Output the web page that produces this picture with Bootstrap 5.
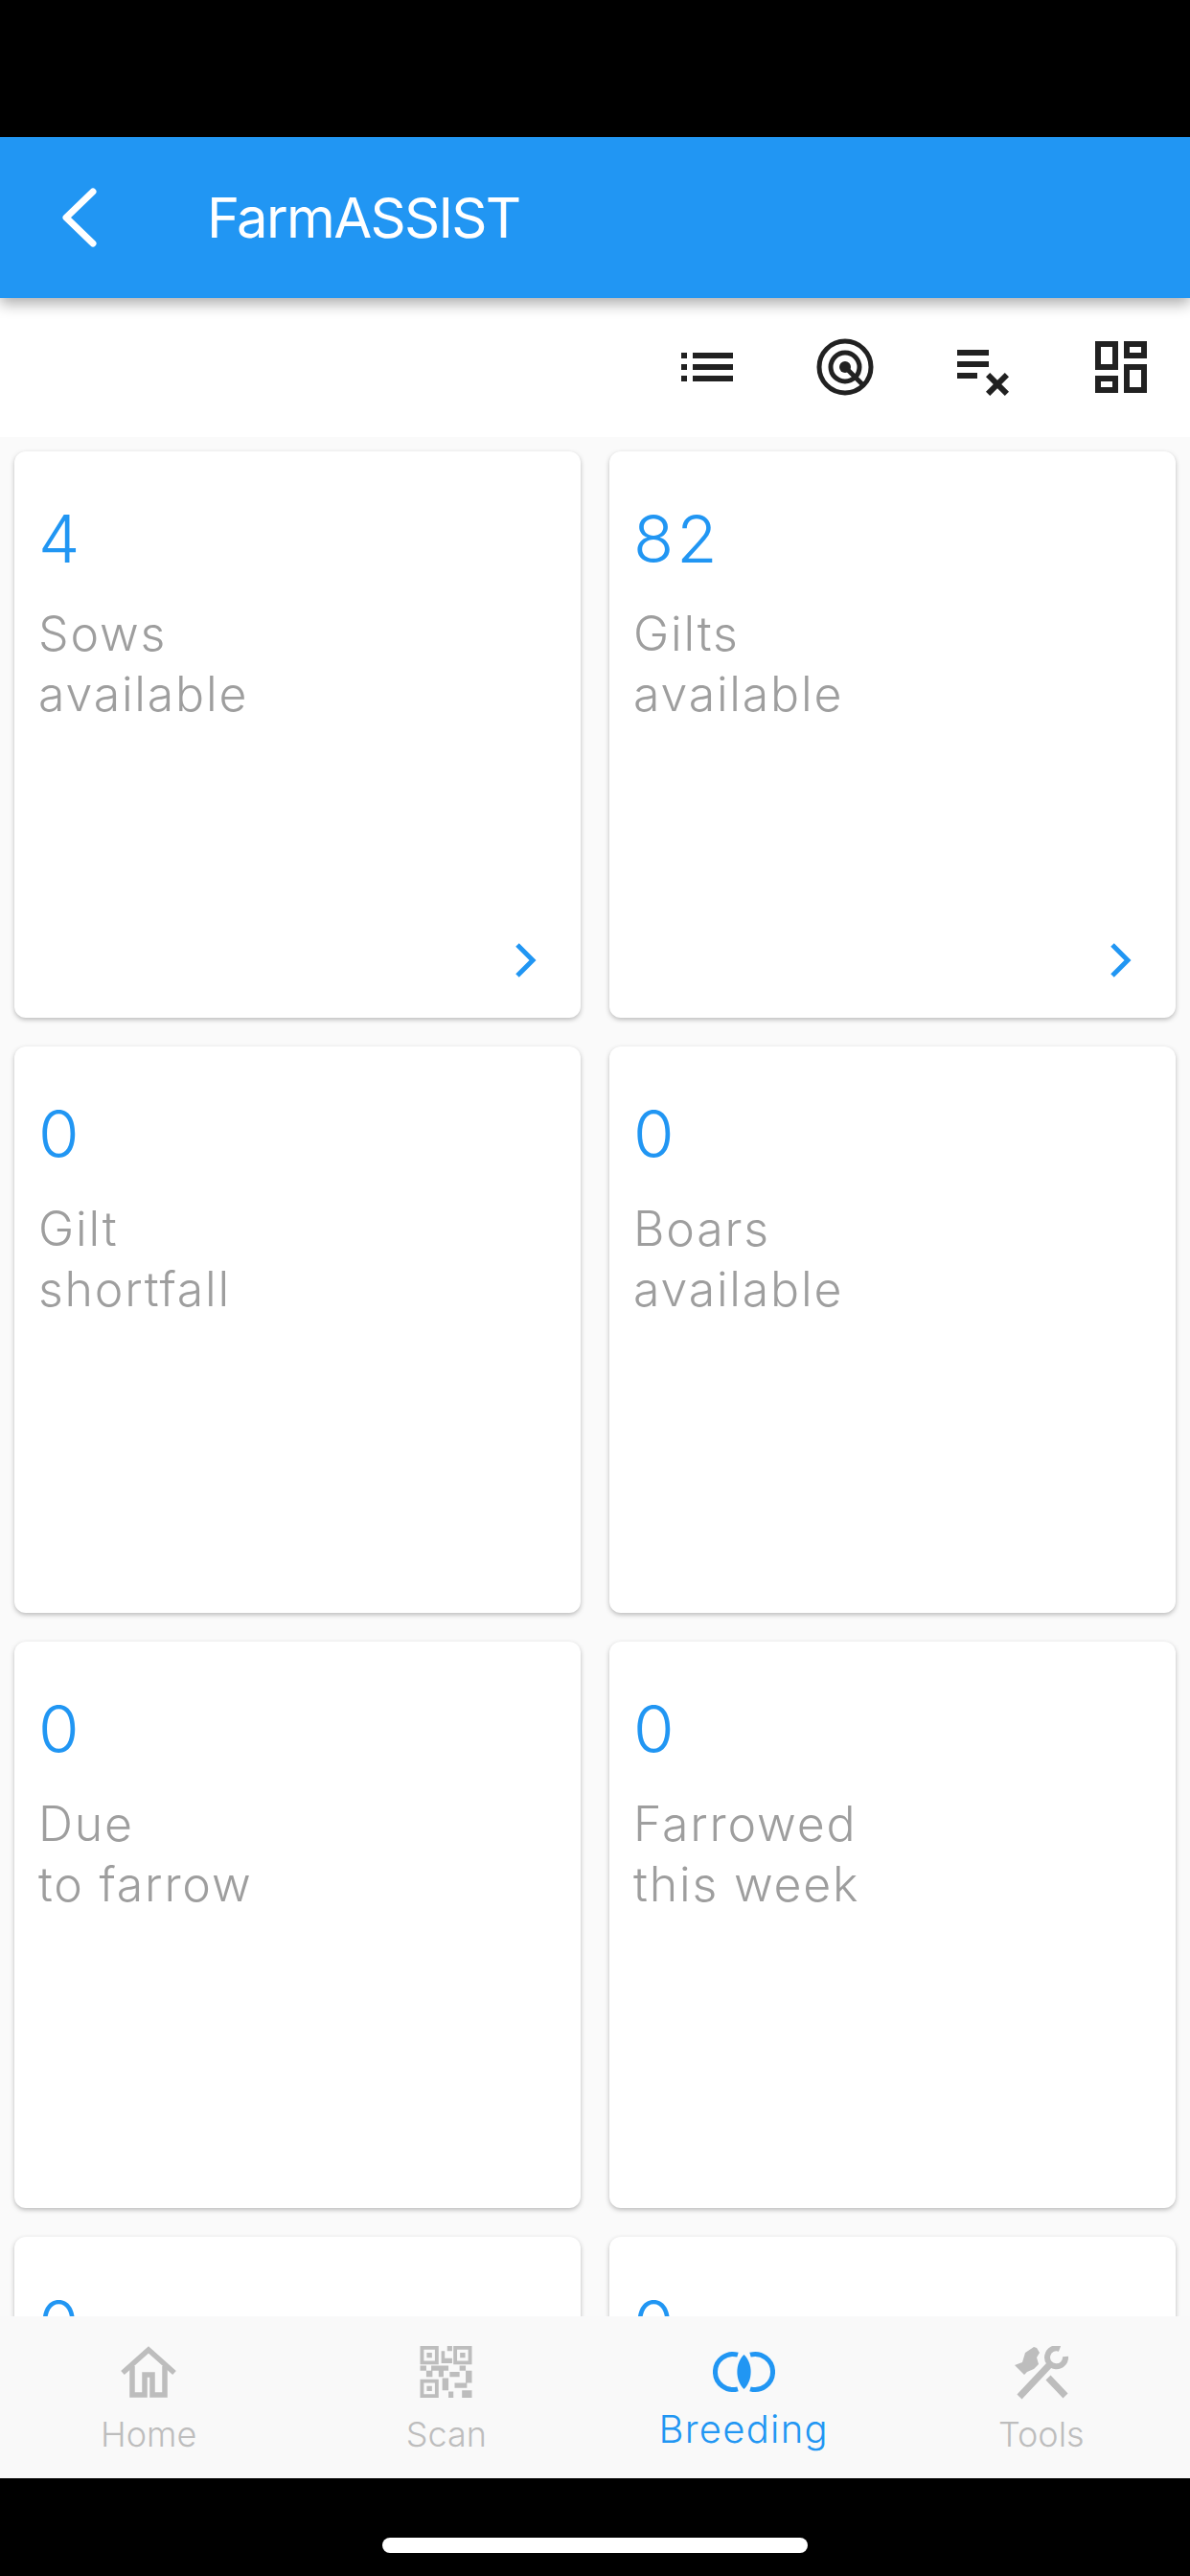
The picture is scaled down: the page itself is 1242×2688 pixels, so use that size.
<!DOCTYPE html>
<html lang="en">
<head>
<meta charset="utf-8">
<title>FarmASSIST</title>
<link href="https://cdn.jsdelivr.net/npm/bootstrap@5.3.0/dist/css/bootstrap.min.css" rel="stylesheet">
<style>
html,body{margin:0;background:#000;}
.phone{width:1242px;height:2688px;background:#000;font-family:Inter,"Liberation Sans",sans-serif;}
.top-inset{height:143px;flex:none;}
.app-bar{height:168px;flex:none;background:#2196f3;color:#fff;box-shadow:0 6px 14px rgba(0,0,0,.32);z-index:2;padding-left:60px;}
.app-bar svg{width:48px;height:64px;flex:none;}
.app-title{font-size:58px;font-weight:400;margin-left:108px;letter-spacing:-1.7px;line-height:1;}
.tool-row{height:145px;flex:none;background:#fff;}
.tool-btn{width:144px;height:144px;background:none;border:0;padding:36px;}
.tool-btn svg{width:72px;height:72px;display:block;fill:#212121;}
.tile-area{flex:1 1 0;min-height:0;background:#fafafa;overflow:hidden;}
.tiles{grid-template-columns:591px 591px;gap:30px;padding:15px;}
.tile{height:591px;background:#fff;border-radius:12px;box-shadow:0 2px 5px rgba(0,0,0,.26);padding:56px 26px 41px 25px;}
.tile-num{font-size:69px;line-height:70px;color:#2196f3;font-weight:300;letter-spacing:3px;}
.tile-label{font-size:50px;line-height:63px;color:#9e9e9e;font-weight:300;letter-spacing:1.8px;margin-top:33px;}
.tile-go{width:24px;height:38px;margin-right:20px;}
.tab-bar{height:169px;flex:none;background:#f9f9f9;}
.tab-item{flex:1 1 0;height:169px;padding-top:31px;color:#bdbdbd;}
.tab-icon{height:56px;}
.tab-label{font-size:36px;line-height:44px;font-weight:300;margin-top:14px;}
.tab-item.on{color:#2196f3;}
.tab-item.on .tab-label{font-size:40px;line-height:50px;letter-spacing:1.3px;margin-top:6px;}
.bottom-inset{height:102px;flex:none;background:#000;}
.home-pill{width:444px;height:16px;border-radius:8px;background:#fff;margin-top:62px;}
</style>
</head>
<body>
<div class="phone d-flex flex-column">
  <div class="top-inset"></div>
  <header class="app-bar d-flex align-items-center">
    <svg viewBox="0 0 48 64" fill="none" stroke="#fff" stroke-width="7" stroke-linecap="round" stroke-linejoin="round"><path d="M37 5 9 32l28 27"/></svg>
    <div class="app-title">FarmASSIST</div>
  </header>
  <div class="tool-row d-flex justify-content-end">
    <button class="tool-btn" type="button" aria-label="List"><svg viewBox="0 0 24 24"><path d="M3 13h2v-2H3v2zm0 4h2v-2H3v2zm0-8h2V7H3v2zm4 4h14v-2H7v2zm0 4h14v-2H7v2zM7 7v2h14V7H7z"/></svg></button>
    <button class="tool-btn" type="button" aria-label="Target"><svg viewBox="0 0 72 72"><g fill="none" stroke="#212121" stroke-width="5"><circle cx="36" cy="36" r="27"/><circle cx="36" cy="36" r="15"/><path d="M36 36 55 55"/></g><circle cx="36" cy="36" r="6"/></svg></button>
    <button class="tool-btn" type="button" aria-label="Clear"><svg viewBox="0 0 24 24"><path d="M14 10H3v2h11v-2zm0-4H3v2h11V6zM3 16h7v-2H3v2zm11.41 6L17 19.41 19.59 22 21 20.59 18.41 18 21 15.41 19.59 14 17 16.59 14.41 14 13 15.41 15.59 18 13 20.59z"/></svg></button>
    <button class="tool-btn" type="button" aria-label="Dashboard"><svg viewBox="0 0 24 24"><path d="M19 5v2h-4V5h4M9 5v6H5V5h4m10 8v6h-4v-6h4M9 17v2H5v-2h4M21 3h-8v6h8V3zM11 3H3v10h8V3zm10 8h-8v10h8V11zm-10 4H3v6h8v-6z"/></svg></button>
  </div>
  <main class="tile-area">
    <div class="tiles d-grid">
      <div class="tile d-flex flex-column"><div class="tile-num">4</div><div class="tile-label">Sows<br>available</div><svg class="tile-go mt-auto align-self-end" viewBox="0 0 24 38" fill="none" stroke="#2196f3" stroke-width="5"><path d="M4 3l16 16L4 35"/></svg></div>
      <div class="tile d-flex flex-column"><div class="tile-num">82</div><div class="tile-label">Gilts<br>available</div><svg class="tile-go mt-auto align-self-end" viewBox="0 0 24 38" fill="none" stroke="#2196f3" stroke-width="5"><path d="M4 3l16 16L4 35"/></svg></div>
      <div class="tile d-flex flex-column"><div class="tile-num">0</div><div class="tile-label">Gilt<br>shortfall</div></div>
      <div class="tile d-flex flex-column"><div class="tile-num">0</div><div class="tile-label">Boars<br>available</div></div>
      <div class="tile d-flex flex-column"><div class="tile-num">0</div><div class="tile-label">Due<br>to farrow</div></div>
      <div class="tile d-flex flex-column"><div class="tile-num">0</div><div class="tile-label">Farrowed<br>this week</div></div>
      <div class="tile d-flex flex-column"><div class="tile-num">0</div></div>
      <div class="tile d-flex flex-column"><div class="tile-num">0</div></div>
    </div>
  </main>
  <nav class="tab-bar d-flex">
    <div class="tab-item d-flex flex-column align-items-center">
      <div class="tab-icon"><svg width="58" height="54" viewBox="0 0 58 54" fill="none" stroke="#bdbdbd" stroke-width="5.5"><path d="M2 28 29 4l27 24"/><path d="M12 21v30h13V30h8v21h13V21"/></svg></div>
      <div class="tab-label">Home</div>
    </div>
    <div class="tab-item d-flex flex-column align-items-center">
      <div class="tab-icon"><svg width="55" height="54" viewBox="0 0 21 21" fill="#bdbdbd"><path fill-rule="evenodd" d="M0 0h7.500v7.500H0zM1.500 1.500v4.500h4.500V1.500zM13.500 0H21v7.500h-7.500zM15 1.500v4.500h4.500V1.500zM0 13.500h7.500V21H0zM1.500 15v4.500h4.500V15z"/><path d="M2.700 2.700h2.100v2.100H2.700zM16.200 2.700h2.100v2.100h-2.100zM2.700 16.200h2.100v2.100H2.700zM11 0h2v2h-2zM8.600 2H10v5H8.600zM10 5h3v2h-3zM0 8h2.500v2H0zM2.500 10H5v2.500H2.500zM4.500 8h7v2h-7zM7.500 10h2v2.500h-2zM12 10.500h4v2h-4zM16 8h2.500v2H16zM18.500 10H21v5h-2.500zM9 13h2.500v5H9zM11.500 18.500h2V21h-2zM14 15h5v2h-5zM17 18h4v3h-4z"/></svg></div>
      <div class="tab-label">Scan</div>
    </div>
    <div class="tab-item on d-flex flex-column align-items-center">
      <div class="tab-icon"><svg width="65" height="54" viewBox="0 0 65 54" fill="none" stroke="#2196f3" stroke-width="5"><g transform="translate(0 6)"><path d="M26 3.200A18.500 18.500 0 1 0 26 38.800"/><path d="M39 3.200A18.500 18.500 0 1 1 39 38.800"/><path fill="#2196f3" stroke="none" d="M32.500 3C42 12 42 30 32.500 39C23 30 23 12 32.500 3Z"/></g></svg></div>
      <div class="tab-label">Breeding</div>
    </div>
    <div class="tab-item d-flex flex-column align-items-center">
      <div class="tab-icon"><svg width="58" height="56" viewBox="11 8 58 56" fill="#bdbdbd"><path d="M23 15 32 9l3 1 3 5-3 5 2 7-5 5-7 3-3 3-10-10 8-3z"/><g fill="none" stroke="#bdbdbd"><path stroke-width="7" d="M17 61 49 27M47 41 65 60"/><path stroke-width="6" d="M59 11A9.500 9.500 0 1 0 65 19"/></g></svg></div>
      <div class="tab-label">Tools</div>
    </div>
  </nav>
  <div class="bottom-inset d-flex justify-content-center"><div class="home-pill"></div></div>
</div>
<script src="https://cdn.jsdelivr.net/npm/bootstrap@5.3.0/dist/js/bootstrap.bundle.min.js"></script>
</body>
</html>
